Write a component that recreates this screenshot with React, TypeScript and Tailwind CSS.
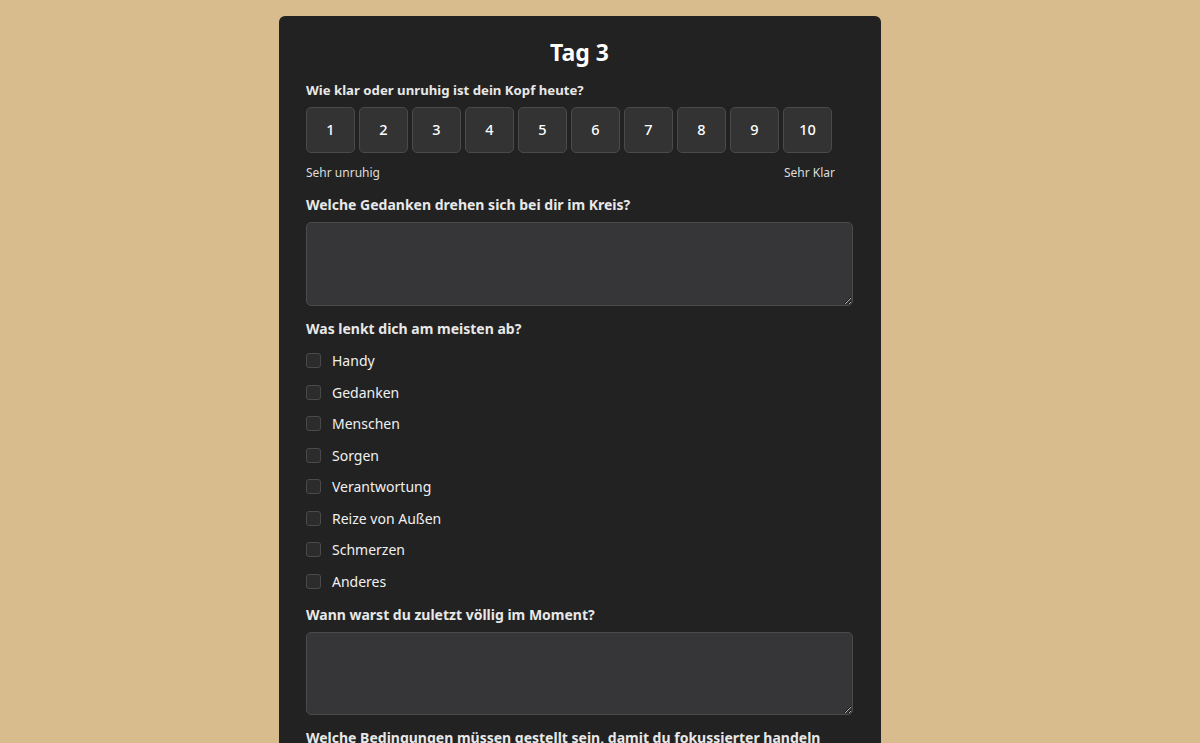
import React from "react";

const font = { fontFamily: '"Noto Sans", "Open Sans", sans-serif' };

export default function App() {
  const nums = [1, 2, 3, 4, 5, 6, 7, 8, 9, 10];
  const opts = [
    "Handy",
    "Gedanken",
    "Menschen",
    "Sorgen",
    "Verantwortung",
    "Reize von Außen",
    "Schmerzen",
    "Anderes",
  ];
  return (
    <div className="bg-[#d8bc8e] flex justify-center pr-[40px] pt-4 overflow-hidden h-[743px]" style={font}>
      <div className="w-[602px] bg-[#222222] rounded-t-[6px] pl-[27px] pr-[28px] pt-[21px] pb-10 text-white self-start">
        <h1 className="text-center text-[23px] font-bold leading-[30px] text-white">Tag 3</h1>
        <div className="mt-[13px] text-[13.2px] font-bold leading-[20px] text-[#e8e8e8]">Wie klar oder unruhig ist dein Kopf heute?</div>
        <div className="inline-flex flex-col mt-[7px]">
          <div className="flex gap-[4px]">
            {nums.map((n) => (
              <button
                key={n}
                className="w-[49px] h-[46px] rounded-[5px] bg-[#333334] border border-[#4a4a4a] text-[14.5px] font-medium text-white flex items-center justify-center"
              >
                {n}
              </button>
            ))}
          </div>
          <div className="flex justify-between mt-[12px] text-[12px] leading-[16px] text-[#dcdcdc]">
            <span>Sehr unruhig</span>
            <span className="mr-[-3px]">Sehr Klar</span>
          </div>
        </div>
        <div className="mt-[14px] text-[14px] font-bold leading-[20px] text-[#e8e8e8]">Welche Gedanken drehen sich bei dir im Kreis?</div>
        <textarea className="mt-[7px] block w-full h-[84px] rounded-[5px] bg-[#363638] border border-[#4a4a4c] resize-y" />
        <div className="mt-[13px] text-[14px] font-bold leading-[20px] text-[#e8e8e8]">Was lenkt dich am meisten ab?</div>
        <div className="mt-[6px] flex flex-col">
          {opts.map((o) => (
            <label key={o} className="flex items-center h-[31.5px] text-[14px] text-[#f0f0f0]">
              <span className="w-[15px] h-[15px] rounded-[3px] bg-[#2c2c2d] border border-[#4a4a4a] mr-[11px]" />
              {o}
            </label>
          ))}
        </div>
        <div className="mt-[8px] text-[14px] font-bold leading-[20px] text-[#e8e8e8]">Wann warst du zuletzt völlig im Moment?</div>
        <textarea className="mt-[7px] block w-full h-[83px] rounded-[5px] bg-[#363638] border border-[#4a4a4c] resize-y" />
        <div className="mt-[13px] text-[14px] font-bold leading-[20px] text-[#e8e8e8]">Welche Bedingungen müssen gestellt sein, damit du fokussierter handeln kannst?</div>
        <textarea className="mt-[8px] block w-full h-[83px] rounded-[5px] bg-[#363638] border border-[#4a4a4c] resize-y" />
      </div>
    </div>
  );
}
